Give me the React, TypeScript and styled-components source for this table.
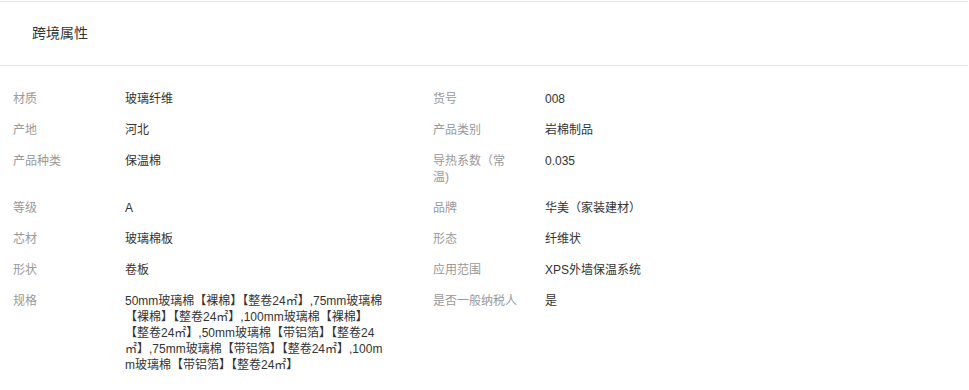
import { createGlobalStyle, styled } from "styled-components"

const GlobalStyle = createGlobalStyle`
    body {
        margin: 0;
        background: #fff;
        font-family: "Liberation Sans", "Noto Sans CJK SC", sans-serif;
    }
`

const Panel = styled.section`
    width: 968px;
    margin-top: 1px;
    border-top: 1px solid #e8e8e8;
`

const Header = styled.div`
    display: flex;
    align-items: center;
    height: 60px;
    padding: 0 0 3px 32px;
    border-bottom: 1px solid #e8e8e8;
`

const Title = styled.h3`
    margin: 0;
    font-size: 14px;
    font-weight: normal;
    color: #333;
`

const AttrList = styled.div`
    display: grid;
    grid-template-columns: 420px 420px;
    padding: 17px 0 10px 13px;
`

const AttrRow = styled.div`
    display: flex;
    padding: 8px 0 7px;
    font-size: 12px;
    line-height: 16px;
`

const Label = styled.span`
    flex: 0 0 86px;
    margin-right: 26px;
    color: #999;
`

// long values come pre-split into lines
const Value = styled.span`
    width: 280px;
    color: #333;
    white-space: pre-line;
    word-break: break-all;
`

const Footer = styled.div`
    width: 945px;
    height: 10px;
    border-top: 1px solid #e8e8e8;
`

const attrs: [string, string][] = [
    ["材质", "玻璃纤维"],
    ["货号", "008"],
    ["产地", "河北"],
    ["产品类别", "岩棉制品"],
    ["产品种类", "保温棉"],
    ["导热系数（常温)", "0.035"],
    ["等级", "A"],
    ["品牌", "华美（家装建材）"],
    ["芯材", "玻璃棉板"],
    ["形态", "纤维状"],
    ["形状", "卷板"],
    ["应用范围", "XPS外墙保温系统"],
    [
        "规格",
        [
            "50mm玻璃棉【裸棉】【整卷24㎡】,75mm玻璃棉",
            "【裸棉】【整卷24㎡】,100mm玻璃棉【裸棉】",
            "【整卷24㎡】,50mm玻璃棉【带铝箔】【整卷24",
            "㎡】,75mm玻璃棉【带铝箔】【整卷24㎡】,100m",
            "m玻璃棉【带铝箔】【整卷24㎡】",
        ].join("\n"),
    ],
    ["是否一般纳税人", "是"],
]

export default function App() {
    return (
        <>
            <GlobalStyle />
            <Panel>
                <Header>
                    <Title>跨境属性</Title>
                </Header>
                <AttrList>
                    {attrs.map(([label, value]) => (
                        <AttrRow key={label}>
                            <Label>{label}</Label>
                            <Value>{value}</Value>
                        </AttrRow>
                    ))}
                </AttrList>
            </Panel>
            <Footer />
        </>
    )
}
